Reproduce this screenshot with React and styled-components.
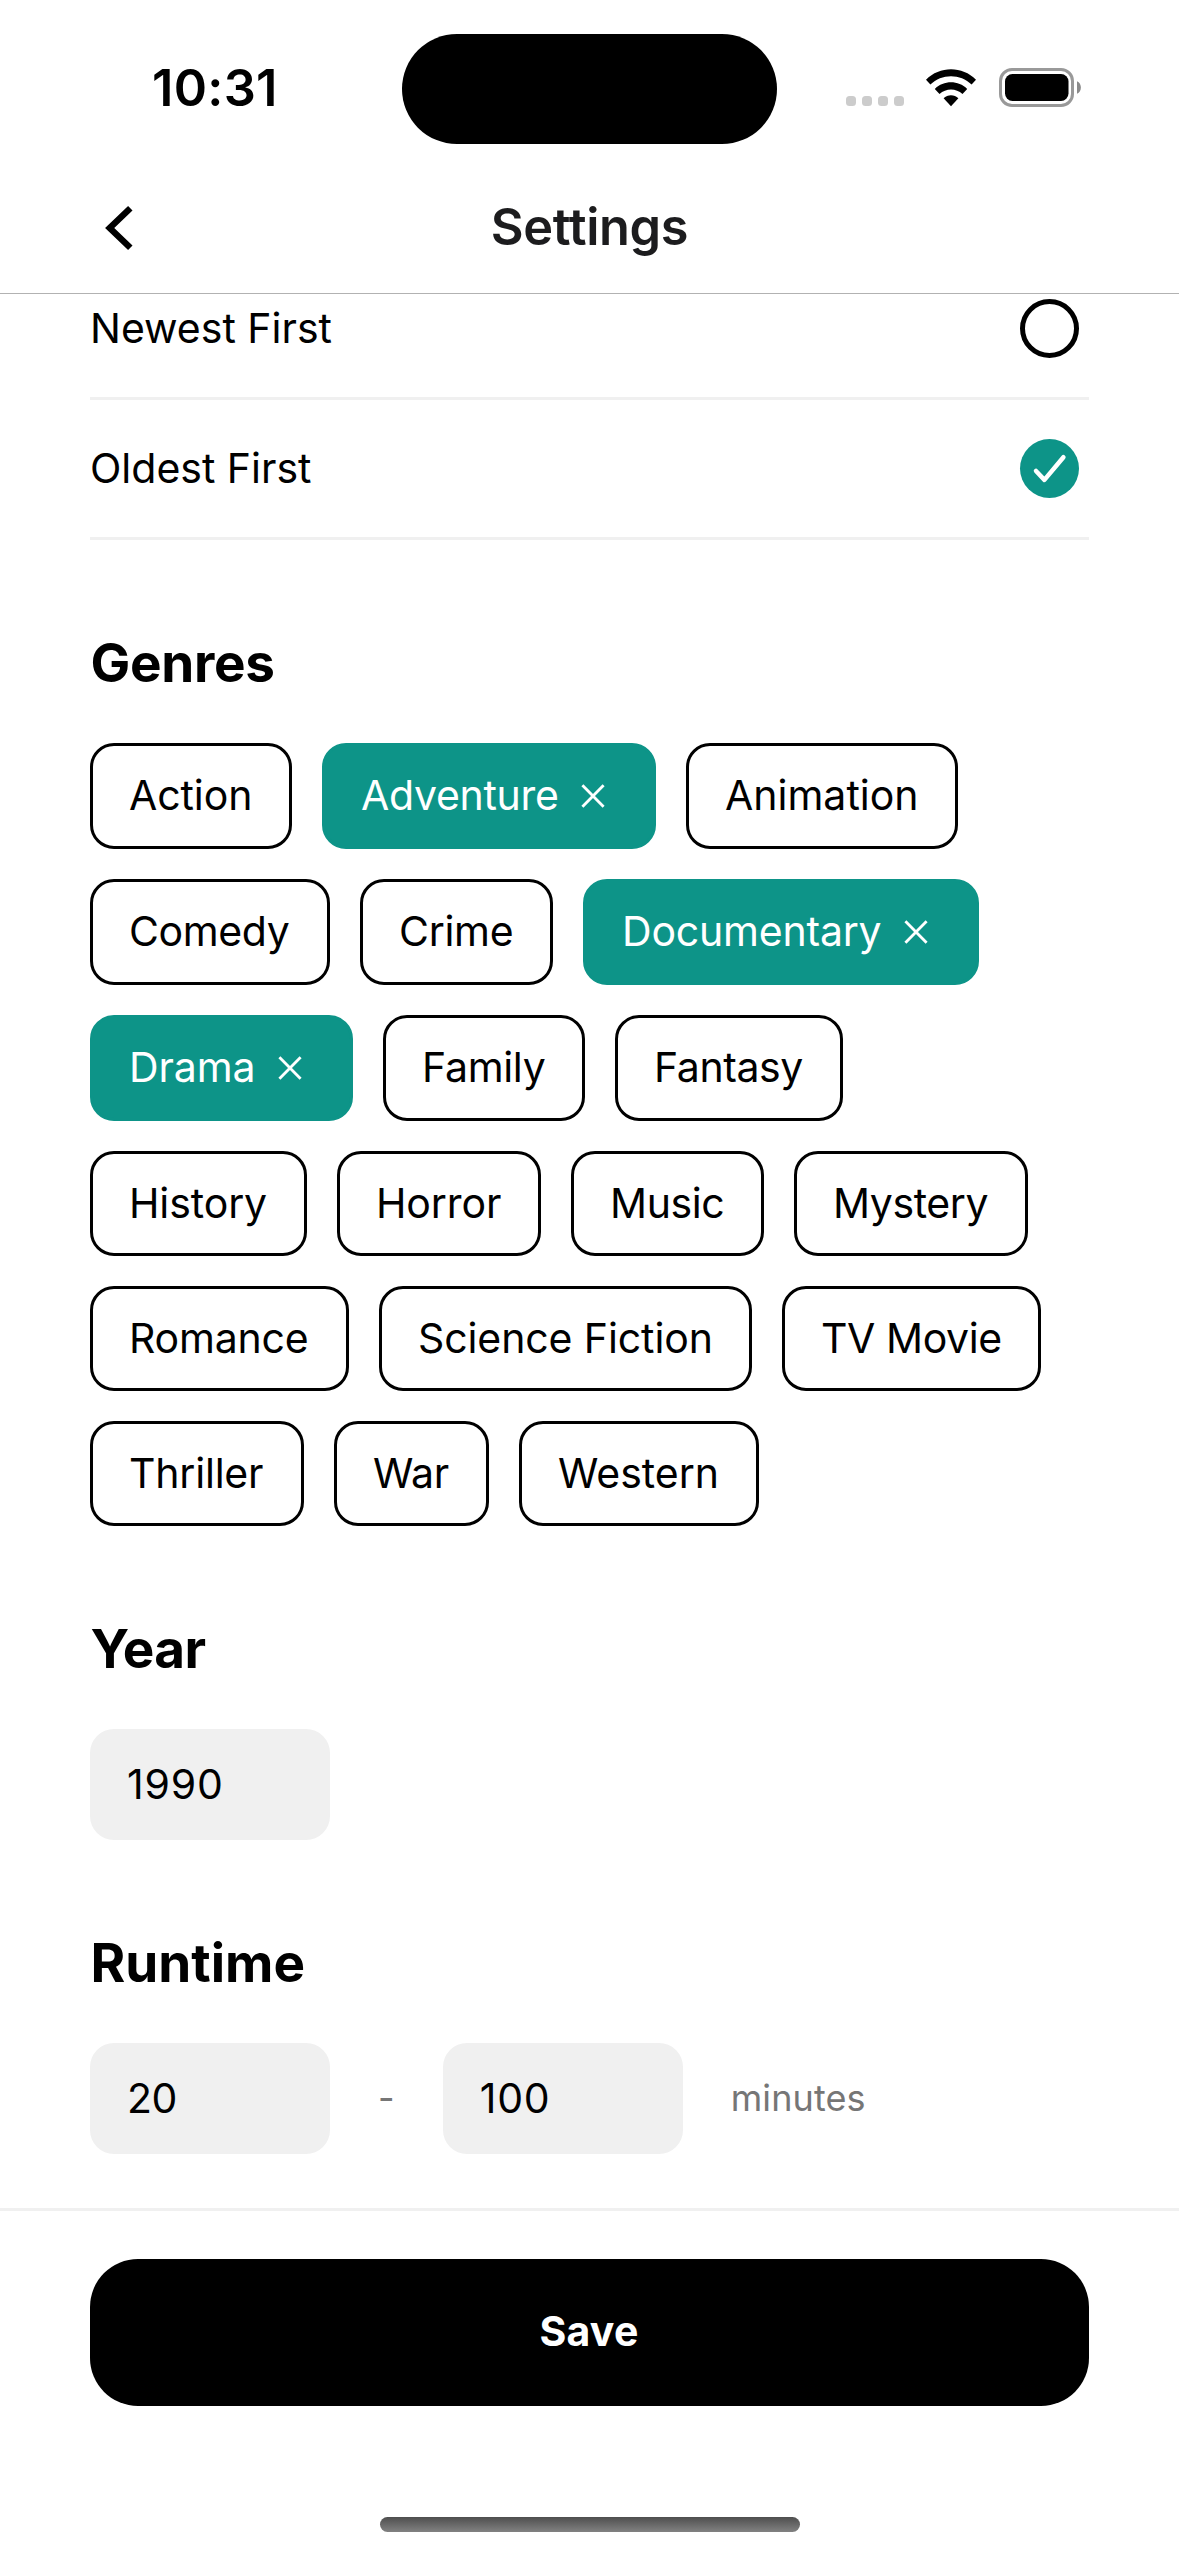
import React from "react";
import styled, { createGlobalStyle } from "styled-components";

const GlobalStyle = createGlobalStyle`
  *, *::before, *::after { box-sizing: border-box; }
  body { margin: 0; background: #fff; }
`;

const TEAL = "#0d9488";

const Screen = styled.div`
  display: flex;
  flex-direction: column;
  width: 1179px;
  height: 2556px;
  overflow: hidden;
  background: #fff;
  color: #000;
  font-family: Inter, "Liberation Sans", sans-serif;
  font-size: 41px;
`;

const StatusBar = styled.div`
  display: grid;
  grid-template-columns: 402px 375px 402px;
  flex: none;
  height: 177px;
  padding-top: 34px;
`;

const Clock = styled.div`
  padding: 23px 0 0 152px;
  font-size: 50.5px;
  font-weight: 600;
  line-height: 62px;
  letter-spacing: 0.3px;
`;

const Island = styled.div`
  height: 110px;
  border-radius: 55px;
  background: #000;
`;

const Indicators = styled.div`
  display: flex;
  align-items: flex-start;
  padding: 34px 0 0 69px;
`;

const Signal = styled.div`
  display: flex;
  gap: 6px;
  padding-top: 28px;
`;

const SignalDot = styled.span`
  width: 10px;
  height: 10px;
  border-radius: 3.5px;
  background: #ccc;
`;

const WifiIcon = styled.svg`
  width: 52px;
  height: 39px;
  margin-left: 21px;
`;

const BatteryIcon = styled.svg`
  width: 84px;
  height: 39px;
  margin-left: 22px;
`;

const Header = styled.header`
  display: grid;
  grid-template-columns: 1fr auto 1fr;
  align-items: center;
  flex: none;
  height: 117px;
  padding: 0 90px 14px;
  border-bottom: 1px solid #b2b2b2;
`;

const BackIcon = styled.svg`
  width: 32px;
  height: 50px;
  margin-left: 14px;
`;

const Title = styled.h1`
  margin: 0;
  padding-bottom: 2px;
  color: #1c1c1e;
  font-size: 50.5px;
  font-weight: 600;
  line-height: 62px;
  letter-spacing: -0.35px;
`;

const Scroller = styled.main`
  flex: 1;
  min-height: 0;
  overflow: hidden;
  padding: 0 90px;
`;

const Options = styled.div`
  margin-top: -34px;
`;

const OptionRow = styled.div`
  display: flex;
  align-items: center;
  justify-content: space-between;
  height: 140px;
  padding-right: 10px;
  border-bottom: 3px solid #f0f0f0;
`;

const OptionLabel = styled.span`
  padding-bottom: 2px;
  line-height: 50px;
`;

const Radio = styled.span`
  display: flex;
  width: 59px;
  height: 59px;
  border: ${(p) => (p.$checked ? "none" : "5px solid #000")};
  border-radius: 50%;
  background: ${(p) => (p.$checked ? TEAL : "transparent")};
`;

const Section = styled.section`
  padding-top: 91px;
`;

const Heading = styled.h2`
  margin: 0 0 48px;
  padding-left: 0.5px;
  font-size: 53px;
  font-weight: 700;
  line-height: 64px;
  letter-spacing: ${(p) => p.$tracking ?? 0}px;
`;

const Chips = styled.div`
  display: flex;
  flex-wrap: wrap;
  gap: 30px;
`;

const Chip = styled.div`
  display: flex;
  align-items: flex-start;
  width: ${(p) => p.$width}px;
  min-height: ${(p) => (p.$selected ? 106 : 105)}px;
  padding: 24px 0 24px 36px;
  border: 3px solid ${(p) => (p.$selected ? TEAL : "#000")};
  border-radius: 24px;
  background: ${(p) => (p.$selected ? TEAL : "transparent")};
  color: ${(p) => (p.$selected ? "#fff" : "#000")};
  line-height: 51px;
  letter-spacing: ${(p) => p.$tracking}px;
  white-space: nowrap;
`;

const RemoveIcon = styled.svg`
  flex: none;
  width: 24px;
  height: 24px;
  margin: 14px 48px 0 auto;
`;

const Fields = styled.div`
  display: flex;
  align-items: center;
`;

const Field = styled.div`
  width: 240px;
  height: 111px;
  padding: 0 37px;
  border-radius: 24px;
  background: #f0f0f0;
  line-height: 111px;
  letter-spacing: ${(p) => p.$tracking ?? 0}px;
`;

const Note = styled.span`
  color: #767676;
  font-size: 36px;
  line-height: 44px;
  margin: 0 48px;
  padding-bottom: 1px;
  letter-spacing: 0.1px;
`;

const Footer = styled.footer`
  display: flex;
  flex-direction: column;
  align-items: center;
  flex: none;
  height: 348px;
  padding: 48px 90px 24px;
  border-top: 3px solid #f0f0f0;
`;

const SaveButton = styled.button`
  width: 100%;
  height: 147px;
  padding: 0 1px 3px 0;
  border: 0;
  border-radius: 48px;
  background: #000;
  color: #fff;
  font: 700 41px/50px Inter, "Liberation Sans", sans-serif;
  letter-spacing: 0.2px;
`;

const HomeIndicator = styled.div`
  width: 420px;
  height: 15px;
  margin-top: auto;
  border-radius: 7.5px;
  background: linear-gradient(#4e4e4e, #828282);
`;

const GENRES = [
  { name: "Action", width: 202, tracking: -0.1 },
  { name: "Adventure", width: 334, tracking: -0.3, selected: true },
  { name: "Animation", width: 272, tracking: 0 },
  { name: "Comedy", width: 240, tracking: -0.4 },
  { name: "Crime", width: 193, tracking: -0.3 },
  { name: "Documentary", width: 396, tracking: -0.2, selected: true },
  { name: "Drama", width: 263, tracking: -0.1, selected: true },
  { name: "Family", width: 202, tracking: -0.3 },
  { name: "Fantasy", width: 228, tracking: -0.4 },
  { name: "History", width: 217, tracking: -0.1 },
  { name: "Horror", width: 204, tracking: -0.1 },
  { name: "Music", width: 193, tracking: -0.4 },
  { name: "Mystery", width: 234, tracking: -0.4 },
  { name: "Romance", width: 259, tracking: -0.2 },
  { name: "Science Fiction", width: 373, tracking: -0.1 },
  { name: "TV Movie", width: 259, tracking: -0.4 },
  { name: "Thriller", width: 214, tracking: -0.2 },
  { name: "War", width: 155, tracking: -0.3 },
  { name: "Western", width: 240, tracking: 0 },
];

function Wifi() {
  return (
    <WifiIcon viewBox="0 0 52 39">
      <path d="M1 11.8C14.5-2.2 37.5-2.2 51 11.8L46.6 16.6C35.5 5.4 16.5 5.4 5.4 16.6Z" />
      <path d="M9.8 20.9C18.8 12 33.2 12 42.2 20.9L37.5 26C31 19.9 21 19.9 14.5 26Z" />
      <path d="M18.6 30.2C22.6 26.2 29.4 26.2 33.4 30.2L26 38.2Z" />
    </WifiIcon>
  );
}

function Battery() {
  return (
    <BatteryIcon viewBox="0 0 84 39">
      <rect x="1.5" y="1.5" width="72" height="36" rx="11.5" fill="none" stroke="#999" strokeWidth="3" />
      <rect x="6" y="6" width="63.5" height="27" rx="7.5" />
      <path d="M78 13.2C83.2 15.5 83.2 23.5 78 25.8Z" fill="#8a8a8a" />
    </BatteryIcon>
  );
}

export default function App() {
  return (
    <Screen>
      <GlobalStyle />
      <StatusBar>
        <Clock>10:31</Clock>
        <Island />
        <Indicators>
          <Signal>
            <SignalDot />
            <SignalDot />
            <SignalDot />
            <SignalDot />
          </Signal>
          <Wifi />
          <Battery />
        </Indicators>
      </StatusBar>

      <Header>
        <BackIcon viewBox="0 0 32 50" fill="none" stroke="#000" strokeWidth="6.4">
          <path d="M26.3 5.2L5.7 25L26.3 44.8" />
        </BackIcon>
        <Title>Settings</Title>
        <span />
      </Header>

      <Scroller>
        <Options>
          <OptionRow>
            <OptionLabel>Newest First</OptionLabel>
            <Radio />
          </OptionRow>
          <OptionRow>
            <OptionLabel>Oldest First</OptionLabel>
            <Radio $checked>
              <svg width="59" height="59" viewBox="0 0 59 59" fill="none" stroke="#fff" strokeWidth="4.5" strokeLinecap="round" strokeLinejoin="round">
                <path d="M16 32L24.4 40.9L43.4 18.2" />
              </svg>
            </Radio>
          </OptionRow>
        </Options>

        <Section>
          <Heading $tracking={-0.3}>Genres</Heading>
          <Chips>
            {GENRES.map((g) => (
              <Chip key={g.name} $width={g.width} $tracking={g.tracking} $selected={g.selected}>
                <span>{g.name}</span>
                {g.selected && (
                  <RemoveIcon viewBox="0 0 24 24" fill="none" stroke="#fff" strokeWidth="2.8">
                    <path d="M1.4 1.2L22.6 22.8M22.6 1.2L1.4 22.8" />
                  </RemoveIcon>
                )}
              </Chip>
            ))}
          </Chips>
        </Section>

        <Section>
          <Heading $tracking={-0.6}>Year</Heading>
          <Fields>
            <Field $tracking={0.8}>1990</Field>
          </Fields>
        </Section>

        <Section>
          <Heading>Runtime</Heading>
          <Fields>
            <Field $tracking={-0.6}>20</Field>
            <Note>-</Note>
            <Field $tracking={0.8}>100</Field>
            <Note>minutes</Note>
          </Fields>
        </Section>
      </Scroller>

      <Footer>
        <SaveButton>Save</SaveButton>
        <HomeIndicator />
      </Footer>
    </Screen>
  );
}
